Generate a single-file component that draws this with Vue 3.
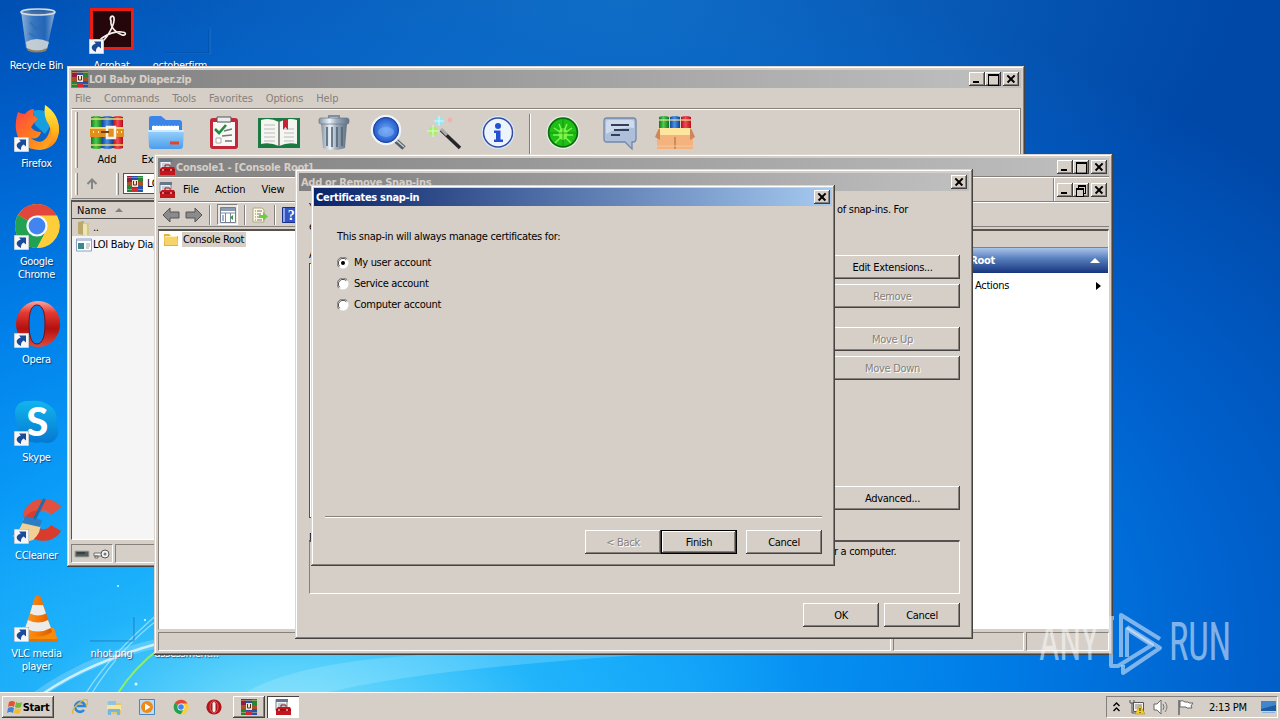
<script setup>
const desktop = [
  { label: 'Recycle Bin', icon: 'bin', cls: 'wide' },
  { label: 'Acrobat', icon: 'acrobat', shortcut: true },
  { label: 'octoberfirm', icon: 'blank', cls: 'shift' },
  { label: 'Firefox', icon: 'firefox', shortcut: true },
  { label: 'Google Chrome', icon: 'chrome', shortcut: true },
  { label: 'Opera', icon: 'opera', shortcut: true },
  { label: 'Skype', icon: 'skype', shortcut: true },
  { label: 'CCleaner', icon: 'ccleaner', shortcut: true },
  { label: 'VLC media player', icon: 'vlc', shortcut: true },
  { label: 'nhot.png', icon: 'blank' },
  { label: 'assessment...', icon: 'none' }
]

// how many icons each desktop row holds
const rows = [3, 1, 1, 1, 1, 1, 3]
let taken = 0
const desktopRows = rows.map((count) => {
  const row = desktop.slice(taken, taken + count)
  taken += count
  return row
})

const rarMenu = ['File', 'Commands', 'Tools', 'Favorites', 'Options', 'Help']

const rarTools = [
  { icon: 'books', label: 'Add', width: 50 },
  { icon: 'extract', label: 'Extract To', width: 68 },
  { icon: 'test', width: 48 },
  { icon: 'view', width: 62 },
  { icon: 'trash', width: 48 },
  { icon: 'find', width: 60 },
  { icon: 'wizard', width: 54 },
  { icon: 'info', width: 52 },
  { icon: 'sep', width: 12 },
  { icon: 'virus', width: 54 },
  { icon: 'comment', width: 60 },
  { icon: 'sfx', width: 50 }
]

const accounts = ['My user account', 'Service account', 'Computer account']
const quickLaunch = ['ie', 'explorer', 'media', 'chrome', 'operasmall']
</script>

<template>
  <div class="screen">
    <!-- icon sheet -->
    <svg class="sheet" width="0" height="0">
      <defs>
        <linearGradient id="gGlass" x1="0" x2="1"><stop offset="0" stop-color="#c3d6e6" stop-opacity=".75" /><stop offset=".35" stop-color="#5e8fc4" stop-opacity=".6" /><stop offset=".7" stop-color="#3d73b8" stop-opacity=".55" /><stop offset="1" stop-color="#b9cfe2" stop-opacity=".8" /></linearGradient>
        <linearGradient id="gFox" x1="0" y1="0" x2="1" y2="1"><stop offset="0" stop-color="#ff3d4d" /><stop offset=".5" stop-color="#ff7a1c" /><stop offset="1" stop-color="#ffb91f" /></linearGradient>
        <linearGradient id="gTail" x1="0" y1="0" x2="0" y2="1"><stop offset="0" stop-color="#fff04a" /><stop offset=".6" stop-color="#ffb61a" /><stop offset="1" stop-color="#ff7d1c" /></linearGradient>
        <linearGradient id="gOpera" x1="0" y1="0" x2="0" y2="1"><stop offset="0" stop-color="#f7a9a2" /><stop offset=".25" stop-color="#e53a32" /><stop offset=".6" stop-color="#b3100f" /><stop offset="1" stop-color="#e04a3c" /></linearGradient>
        <linearGradient id="gSkype" x1="0" y1="0" x2="0" y2="1"><stop offset="0" stop-color="#12b5ee" /><stop offset="1" stop-color="#0578d0" /></linearGradient>
        <linearGradient id="gCone" x1="0" x2="1"><stop offset="0" stop-color="#ff9a2e" /><stop offset=".5" stop-color="#f57a05" /><stop offset="1" stop-color="#d95d00" /></linearGradient>
        <linearGradient id="gFolder" x1="0" y1="0" x2="0" y2="1"><stop offset="0" stop-color="#9bd4fb" /><stop offset="1" stop-color="#4b9cec" /></linearGradient>
        <linearGradient id="gMetal" x1="0" x2="1"><stop offset="0" stop-color="#8494a4" /><stop offset=".35" stop-color="#edf3f8" /><stop offset=".6" stop-color="#9aaaba" /><stop offset="1" stop-color="#5f7182" /></linearGradient>
        <linearGradient id="gRed" x1="0" x2="1"><stop offset="0" stop-color="#b60d1c" /><stop offset=".45" stop-color="#f24a52" /><stop offset="1" stop-color="#b60d1c" /></linearGradient>
        <linearGradient id="gGreen" x1="0" x2="1"><stop offset="0" stop-color="#137a1c" /><stop offset=".45" stop-color="#4ecb50" /><stop offset="1" stop-color="#11721a" /></linearGradient>
        <linearGradient id="gBlue" x1="0" x2="1"><stop offset="0" stop-color="#14479c" /><stop offset=".45" stop-color="#4a8fe8" /><stop offset="1" stop-color="#123f8e" /></linearGradient>
        <radialGradient id="gLens"><stop offset="0" stop-color="#6faaf5" /><stop offset="1" stop-color="#1a50c8" /></radialGradient>
      </defs>

      <symbol id="i-bin" viewBox="0 0 48 48">
        <path d="M8 5 L13 42 Q24 48 34 42 L42 6 Z" fill="url(#gGlass)" />
        <path d="M13 36 Q23 30 36 36 L34 43 Q24 48 14 43Z" fill="#d9dad6" opacity=".85" />
        <path d="M14 42 Q24 47 34 42 L33 45 Q24 48 15 45Z" fill="#8c7d66" />
        <path d="M17 16 L23 23 L31 18 L29 28 M16 27 L22 31" fill="none" stroke="#2f69ae" stroke-width="2" opacity=".6" />
        <ellipse cx="25" cy="6" rx="17" ry="3" fill="#4c6e98" fill-opacity=".6" stroke="#d4dde2" stroke-width="1.6" />
      </symbol>
      <symbol id="i-acrobat" viewBox="0 0 48 48">
        <path d="M2 2h44v42H2z" fill="#ee1c12" /><path d="M5 5h38v36H5z" fill="#25060a" />
        <path d="M23 15c-2-4 2-7 3-3 1 5-5 17-10 22-3 3-5 0-2-2 5-4 14-7 20-6 5 0 4 4 0 3-6-2-12-8-11-14z" fill="none" stroke="#f5efee" stroke-width="1.7" />
      </symbol>
      <symbol id="i-blank" viewBox="0 0 48 48">
        <path d="M2 47 H46 V23" fill="none" stroke="#073c79" stroke-opacity=".45" stroke-width="1" />
        <path d="M2 48 H47 V22" fill="none" stroke="#58b9f1" stroke-opacity=".25" />
      </symbol>
      <symbol id="i-firefox" viewBox="0 0 48 48">
        <circle cx="25" cy="24" r="18" fill="#0b65c9" /><path d="M20 7q14-4 21 10l-9 13-10-9z" fill="#159fe0" />
        <path d="M5 8q3 2 7 2 4-5 9-5l-1 6 5 4-4 4-3 4q3 5 10 5-2 8-10 6 10 8 16-1 7-12-1-21l-1-11q14 10 14 25Q45 44 27 46 6 45 3 26q-1-9 2-18z" fill="url(#gFox)" />
        <path d="M32 1q14 9 14 25-1 14-13 18 10-9 3-23-6-8-4-20z" fill="url(#gTail)" />
      </symbol>
      <symbol id="i-chrome" viewBox="0 0 48 48">
        <circle cx="24" cy="24" r="22" fill="#ffcf36" />
        <path d="M24 24 L5 13 A22 22 0 0 1 43.5 13.5 Z" fill="#e1483b" /><path d="M5 13 A22 22 0 0 0 24 46 L33 29 L24 24Z" fill="#23a152" />
        <path d="M24 13.5h20A22 22 0 0 1 24 46l9-17z" fill="#fdce3a" />
        <circle cx="24" cy="24" r="10.6" fill="#f7f9fc" /><circle cx="24" cy="24" r="8.4" fill="#4285f0" />
      </symbol>
      <symbol id="i-opera" viewBox="0 0 48 48">
        <path fill-rule="evenodd" d="M25 1a22 23 0 1 0 .1 0zM24 5c6 0 8 8 8 19s-2 20-8 20-8-9-8-20 2-19 8-19z" fill="url(#gOpera)" />
        <path d="M24 5c6 0 8 8 8 19s-2 20-8 20-8-9-8-20 2-19 8-19z" fill="none" stroke="#771018" stroke-width="1" />
      </symbol>
      <symbol id="i-skype" viewBox="0 0 48 48">
        <path d="M14 3C22 3 26 2 32 5 42 9 45 17 43 25 50 38 40 48 29 44 16 47 4 39 5 26-2 13 4 3 14 3z" fill="url(#gSkype)" />
        <text x="24" y="38" text-anchor="middle" font-family="Lato" font-weight="900" font-size="40" fill="#fff">S</text>
      </symbol>
      <symbol id="i-ccleaner" viewBox="0 0 48 48">
        <path d="M48 11C38-3 9 1 10 24c1 25 30 26 38 11l-10-6c-6 8-15 4-15-5s9-14 15-5z" fill="#d93b2c" />
        <path d="M48 11C38-3 9 1 10 24q10-16 28-5z" fill="#e8604c" opacity=".6" />
        <path d="M0 40q9-8 11-18l16 5q2 9-7 17-12 4-20-4z" fill="#f2cf94" /><path d="M12 20l17 4-2 7-18-4z" fill="#2c7ec4" /><path d="M22 22 31 4" stroke="#226cab" stroke-width="3" stroke-linecap="round" />
      </symbol>
      <symbol id="i-vlc" viewBox="0 0 48 48">
        <path d="M12 34h29l4 13H8z" fill="#f78b0c" /><path d="M8 45h37v3H8z" fill="#e47400" />
        <path d="M22 3q3-3 6 0l11 35q-14 9-28 0z" fill="url(#gCone)" />
        <path d="M19.500 11h10.500l3 8.500q-8 4-16 0zM15 26q10 5 20 0l3 8q-13 7-26 0z" fill="#ececea" />
      </symbol>
      <symbol id="i-none" viewBox="0 0 48 48"></symbol>

      <symbol id="i-arrow" viewBox="0 0 15 15">
        <path d="M0 0h15v15H0z" fill="#f4f6f8" stroke="#9aa2ab" />
        <path d="M5 2.500h7v7L9.700 7.400Q6.500 9 7 13 1.500 10.500 3 7 4.300 5.300 6.800 4.500z" fill="#1b4b96" />
      </symbol>

      <symbol id="i-rar" viewBox="0 0 16 16">
        <path d="M0 0h5v16H0z" fill="#8f1f3c" /><path d="M5 0h6v16H5z" fill="#2b4da8" /><path d="M11 0h5v16h-5z" fill="#26843a" />
        <path d="M0 9h5v7H0z" fill="#21843b" /><path d="M11 9h5v7h-5z" fill="#2454a8" /><path d="M0 1h16v1H0zM0 13h16v1H0z" fill="#f1c37a" opacity=".5" />
        <path d="M0 6h16v4H0z" fill="#ab4f26" /><path d="M5 4h6v7H5z" fill="#f4e2c8" /><path d="M6.500 5v4h3V5" fill="none" stroke="#5a2a2a" /><path d="M5 12h6v4H5z" fill="#d82838" />
      </symbol>
      <symbol id="i-mmc" viewBox="0 0 16 16">
        <path d="M1 .5h11v11H1z" fill="#eef1f4" stroke="#7b8490" /><path d="M1 0h12v3H1z" fill="#65778c" /><path d="M3 5h7M3 7h7" stroke="#a1aab5" />
        <path d="M3 8h12l1 2v6H1v-6z" fill="#c5161e" /><path d="M6 8V6h5v2" fill="none" stroke="#9c1118" /><path d="M1 11h15" stroke="#7b0b11" /><path d="M4 10v2M12 10v2" stroke="#fff" />
      </symbol>

      <symbol id="i-books" viewBox="0 0 36 36">
        <path d="M2 2q5-2 11 0v31q-5 2-11 0z" fill="url(#gGreen)" /><path d="M13 2q5-2 11 0v31q-5 2-11 0z" fill="url(#gBlue)" /><path d="M24 2q5-2 10 0v31q-5 2-10 0z" fill="url(#gRed)" />
        <path d="M2 4h32M2 30h32" stroke="#e6dc70" stroke-width="1.500" /><path d="M1 12h34v10H1z" fill="#e38f1e" /><path d="M1 13h34" stroke="#fad26c" stroke-width="2" />
        <path d="M18 12h8v11h-8z" fill="none" stroke="#f2f2ef" stroke-width="2.500" /><path d="M12 17h8" stroke="#7e3d10" stroke-width="2" /><path d="M4 17h1m4 0h1m18 0h1m3 0h1" stroke="#fff3b0" stroke-width="2" />
      </symbol>
      <symbol id="i-extract" viewBox="0 0 36 36">
        <path d="M1 3q0-2 3-2h9l5 4h13q3 0 3 3v20H1z" fill="#3b84e8" /><path d="M4 11h27v10H4z" fill="#fdfefe" /><path d="M5 10.500h26" stroke="#aac" stroke-dasharray="1.500 1.500" />
        <path d="M0 15h36l-1 16q0 3-3 3H4q-3 0-3-3z" fill="url(#gFolder)" /><path d="M0 16h36" stroke="#cbeaff" stroke-width="2" /><path d="M22 28h9" stroke="#e0452c" stroke-width="3" />
      </symbol>
      <symbol id="i-test" viewBox="0 0 36 36">
        <rect x="4" y="3" width="28" height="31" rx="3" fill="#c2283a" /><path d="M7 7h22v24H7z" fill="#f8f8f6" /><path d="M11 2h14v5H11z" fill="#e9ecef" stroke="#555" />
        <path d="M9 14l4 4 7-8" fill="none" stroke="#238c3e" stroke-width="2.600" /><path d="M18 16l8-2M16 21l10-1M19 26h7" stroke="#777" stroke-width="1.300" /><path d="M10 23h5v5h-5z" fill="#fff" stroke="#aaa" />
      </symbol>
      <symbol id="i-view" viewBox="0 0 44 36">
        <path d="M1 3h42v30H1z" fill="#1b7a42" /><path d="M4 5q9-3 18 2 9-5 18-2v24q-9-2-18 2-9-4-18-2z" fill="#f5f5f2" /><path d="M22 7v24" stroke="#8b8b8b" stroke-width="2" />
        <path d="M7 10h11M7 14h11M7 18h11M7 22h11M7 26h11M27 14h10M27 18h10M27 22h10M27 26h10" stroke="#bbb" /><path d="M26 4h5v11l-2.500-3L26 15z" fill="#c82234" />
      </symbol>
      <symbol id="i-trash" viewBox="0 0 36 36">
        <path d="M13 4V1h10v3" fill="none" stroke="#7d8fa0" stroke-width="2" /><path d="M5 8h26l-2 25q-11 4-22 0z" fill="url(#gMetal)" />
        <rect x="3" y="3" width="30" height="6" rx="2" fill="url(#gMetal)" stroke="#64778a" stroke-width=".7" /><path d="M11 12v19M16 12v20M21 12v20M26 12v19" stroke="#536576" stroke-width="1.600" />
      </symbol>
      <symbol id="i-find" viewBox="0 0 36 36">
        <path d="M25 25l9 8" stroke="#555d66" stroke-width="5" /><path d="M26 25l8 7" stroke="#c5cdd4" stroke-width="1.500" />
        <circle cx="16" cy="15" r="14" fill="url(#gLens)" stroke="#eef4fb" stroke-width="2.500" /><circle cx="16" cy="15" r="12.500" fill="none" stroke="#1d3f94" /><ellipse cx="16" cy="17" rx="8" ry="5" fill="#81b3f6" opacity=".55" />
      </symbol>
      <symbol id="i-wizard" viewBox="0 0 36 36">
        <path d="M14 15l19 18" stroke="#25262a" stroke-width="3.500" /><path d="M14 14l6 6" stroke="#aaa" stroke-width="3" /><circle cx="12" cy="6" r="4" fill="#8ee9fa" /><circle cx="6" cy="16" r="4.500" fill="#a6ef6a" /><circle cx="23" cy="5" r="2.500" fill="#f3b1ae" />
        <path d="M12 1v10M7 6h10M6 10v12M0 16h12" stroke="#fff" opacity=".7" />
      </symbol>
      <symbol id="i-info" viewBox="0 0 36 36">
        <circle cx="18" cy="17.500" r="16.500" fill="#dbe8fb" /><circle cx="18" cy="17.500" r="14.500" fill="#eef4fd" stroke="#2f4da0" stroke-width="1.500" /><circle cx="18" cy="11" r="3" fill="#2451d2" /><path d="M14 15.500h6.500v9H23v2.500h-9v-2.500h2V18h-2z" fill="#2451d2" />
      </symbol>
      <symbol id="i-virus" viewBox="0 0 36 36">
        <circle cx="18" cy="17.500" r="16.500" fill="#e7f3e2" /><circle cx="18" cy="17.500" r="15.300" fill="#0c7010" /><circle cx="18" cy="17.500" r="13.500" fill="#20be18" /><ellipse cx="18" cy="19" rx="4.500" ry="6" fill="#7df648" />
        <path d="M14 9l2 5m6-5l-2 5M9 13l6 4M27 13l-6 4M8 20h6m14 0h-6M10 28l5-5m11 5l-5-5" stroke="#7df648" stroke-width="1.500" /><path d="M18 4v27M5 18h26" stroke="#0e8b12" stroke-width=".7" />
      </symbol>
      <symbol id="i-comment" viewBox="0 0 36 36">
        <path d="M5 3h26q3 0 3 3v18q0 3-3 3h-1v7l-7-7H5q-3 0-3-3V6q0-3 3-3z" fill="#aebfd9" stroke="#7189ab" stroke-width="1.300" /><path d="M6 5h24q2 0 2 3v5Q20 11 4 19V8q0-3 2-3z" fill="#dde7f4" opacity=".7" /><path d="M9 10h18M12 15h15M9 20h9" stroke="#33405a" stroke-width="1.800" />
      </symbol>
      <symbol id="i-sfx" viewBox="0 0 42 36">
        <path d="M5 2q5-2 10 0v14H5z" fill="url(#gGreen)" /><path d="M16 2q5-2 10 0v14H16z" fill="url(#gBlue)" /><path d="M27 2q5-2 10 0v14H27z" fill="url(#gRed)" /><path d="M5 5h32" stroke="#f0e6a0" stroke-width="1.200" />
        <path d="M4 13h34v8H4z" fill="#fde59d" /><path d="M3 20h36v14H3z" fill="#f4b27c" /><path d="M5 13L1 22l5 3V14zM37 13l4 9-5 3V14z" fill="#cf855c" /><path d="M21 22v12" stroke="#a36744" /><path d="M3 31h36" stroke="#f9c79c" />
      </symbol>

      <symbol id="i-folder" viewBox="0 0 16 16"><path d="M1 3h5l2 2h7v10H1z" fill="#e0b33f" /><path d="M2 5h12v8H2z" fill="#fff0b0" /><path d="M1 6h13l1 8H2z" fill="#f6d36b" /></symbol>
      <symbol id="i-upfolder" viewBox="0 0 16 16"><path d="M2 2l6-1v14l-6-1z" fill="#b9aa6c" /><path d="M7 3h6v12H7z" fill="#d2c78f" /><path d="M7 4q3-1 4 1v11l-4-1z" fill="#eee5b4" /></symbol>
      <symbol id="i-app" viewBox="0 0 16 16"><path d="M.5 2h15v12H.5z" fill="#fff" stroke="#8ba0c4" /><path d="M1 2h14v2H1z" fill="#b9c9e4" /><path d="M2 6h6v6H2z" fill="#3b8a8a" /><path d="M10 7h4M10 9h4M10 11h3" stroke="#9aa" /></symbol>
      <symbol id="i-left" viewBox="0 0 18 16"><path d="M1 8l7-7v4h9v6H8v4z" fill="#8b8b8b" stroke="#555" /></symbol>
      <symbol id="i-right" viewBox="0 0 18 16"><path d="M17 8l-7-7v4H1v6h9v4z" fill="#8b8b8b" stroke="#555" /></symbol>
      <symbol id="i-panes" viewBox="0 0 16 16"><path d="M.5.500h15v15H.5z" fill="#fff" stroke="#777f8c" /><path d="M1 1h14v3H1z" fill="#8a9ab0" /><path d="M1 6h14M5.500 6v9M10.500 6v9" stroke="#7d8a9a" /><path d="M2 8h2v6H2z" fill="#98b7da" /><path d="M13 8v5l-3-2.500z" fill="#2ca02c" /></symbol>
      <symbol id="i-export" viewBox="0 0 16 16"><path d="M1 1h9l2 2v12H1z" fill="#fdf9e7" stroke="#b0a780" /><path d="M3 4h1m1 0h5M3 7h1m1 0h4M3 10h1m1 0h3M3 13h1m1 0h5" stroke="#777" /><path d="M7 8h4V5l5 4.500L11 14v-3H7z" fill="#6bce42" /></symbol>
      <symbol id="i-help" viewBox="0 0 16 16"><path d="M.5.500h14v15H.5z" fill="#3555c5" stroke="#1b2f86" /><path d="M1 1h2v14H1z" fill="#8ea6ec" /><text x="9" y="13" text-anchor="middle" font-family="Liberation Serif" font-weight="700" font-size="14" fill="#fff">?</text></symbol>

      <symbol id="i-flag" viewBox="0 0 16 16"><path d="M2 3q3-2 6 0L7 8Q4 6 1 8z" fill="#e4512a" /><path d="M9 3q3 2 6 0l-1 5q-3 2-6 0z" fill="#74b93a" /><path d="M1 9q3-2 6 0l-1 5q-3-2-6 0z" fill="#3f86d8" /><path d="M8 9q3 2 6 0l-1 5q-3 2-6 0z" fill="#f5bd2b" /></symbol>
      <symbol id="i-ie" viewBox="0 0 16 16"><path d="M12 11a5 5 0 1 1 1-4H5" fill="none" stroke="#2a86d8" stroke-width="2.600" /><path d="M1 15Q-1 11 6 5t9-4q2 2-1 6" fill="none" stroke="#e7b72e" stroke-width="1.300" /></symbol>
      <symbol id="i-explorer" viewBox="0 0 16 16"><path d="M1 3h5l1 1h8v11H1z" fill="#e9c863" /><path d="M2 2h8v6H2z" fill="#8cc4e8" /><path d="M1 6h14v5H1z" fill="#f8e49c" /><path d="M2 10h12v6h-3v-3H5v3H2z" fill="#74b8e2" /></symbol>
      <symbol id="i-media" viewBox="0 0 16 16"><path d="M.5.500h15v15H.5z" fill="#bddcf5" stroke="#4a86c0" /><circle cx="8" cy="8" r="6" fill="#f08a16" /><path d="M6 4.500l5.500 3.500L6 11.500z" fill="#fff" /></symbol>
      <symbol id="i-operasmall" viewBox="0 0 16 16"><circle cx="8" cy="8" r="7.600" fill="#b0141a" /><ellipse cx="8" cy="8" rx="4" ry="6" fill="none" stroke="#e8766e" stroke-width=".8" /><rect x="6.500" y="3" width="3" height="10" rx="1.500" fill="#f4efee" /></symbol>
    </svg>

    <svg class="wallpaper" viewBox="0 0 1280 720">
      <path d="M30 700Q100 650 180 640Q330 600 500 480" fill="none" stroke="#fff" stroke-opacity=".2" stroke-width="9" />
      <path d="M44 693Q90 662 160 643" fill="none" stroke="#e4fbff" stroke-opacity=".8" stroke-width="2.500" />
      <path d="M86 693Q110 655 160 612M92 693Q120 648 160 618" fill="none" stroke="#c8f3ff" stroke-opacity=".6" stroke-width="1.300" />
      <path d="M118 693Q134 668 160 648" fill="none" stroke="#8cf06a" stroke-width="2" />
      <path d="M246 692Q300 662 420 655H640Q420 670 330 692z" fill="#c9f5ff" opacity=".22" />
      <circle cx="118" cy="586" r="1" fill="#bff" /><circle cx="136" cy="684" r="1.500" fill="#dff" /><circle cx="145" cy="620" r="1" fill="#dff" />
    </svg>

    <div class="desktop">
      <div v-for="(row, r) in desktopRows" :key="r" class="desk-row">
        <div v-for="item in row" :key="item.label" class="desk-item" :class="item.cls">
          <div class="desk-icon">
            <svg width="48" height="48"><use :href="'#i-' + item.icon" /></svg>
            <svg v-if="item.shortcut" class="shortcut" width="15" height="15"><use href="#i-arrow" /></svg>
          </div>
          <span class="desk-label">{{ item.label }}</span>
        </div>
      </div>
    </div>

    <!-- archive window -->
    <section class="win rar">
      <header class="title">
        <svg width="16" height="16"><use href="#i-rar" /></svg>
        <b class="t-rar">LOI Baby Diaper.zip</b>
        <div class="caps"><i class="cap min"></i><i class="cap max"></i><i class="cap close"></i></div>
      </header>
      <nav class="rar-menu"><span v-for="m in rarMenu" :key="m">{{ m }}</span></nav>
      <div class="rar-bars">
        <div class="rar-tools">
          <i class="grip"></i>
          <div v-for="t in rarTools" :key="t.icon" class="tool" :style="{ width: t.width + 'px' }">
            <i v-if="t.icon === 'sep'" class="tool-sep"></i>
            <svg v-else :width="t.icon === 'view' ? 44 : t.icon === 'sfx' ? 42 : 36" height="36"><use :href="'#i-' + t.icon" /></svg>
            <span v-if="t.label">{{ t.label }}</span>
          </div>
        </div>
        <div class="rar-address">
          <i class="grip"></i>
          <svg class="up" width="12" height="12" viewBox="0 0 12 12"><path d="M6 11V2M1.500 6L6 1.500 10.500 6" fill="none" stroke="#858585" stroke-width="2" /></svg>
          <i class="grip"></i>
          <div class="address"><svg width="16" height="16"><use href="#i-rar" /></svg>LOI Baby Diaper.zip</div>
        </div>
      </div>
      <div class="rar-list">
        <div class="list-head">Name<i class="sort"></i></div>
        <div class="list-row parent"><svg width="16" height="16"><use href="#i-upfolder" /></svg>..</div>
        <div class="list-row"><svg width="16" height="16"><use href="#i-app" /></svg>LOI Baby Diaper</div>
      </div>
      <footer class="rar-status">
        <div class="cell drive">
          <svg width="36" height="12" viewBox="0 0 36 12"><path d="M1 3h14v6H1z" fill="#555a5c" stroke="#aaa" /><path d="M3 5h8" stroke="#222" /><path d="M20 5h9v3h-9zM21 8h3v2h-3z" fill="#f3f3f3" stroke="#555" stroke-width=".8" /><circle cx="31" cy="6" r="4" fill="#f3f3f3" stroke="#555" /><circle cx="31" cy="6" r="1.500" fill="#777" /></svg>
        </div>
        <div class="cell rest"></div>
      </footer>
    </section>

    <!-- management console -->
    <section class="win mmc">
      <header class="title">
        <svg width="16" height="16"><use href="#i-mmc" /></svg>
        <b class="t-mmc">Console1 - [Console Root]</b>
        <div class="caps"><i class="cap min"></i><i class="cap max"></i><i class="cap close"></i></div>
      </header>
      <nav class="mmc-menu">
        <svg width="16" height="16"><use href="#i-mmc" /></svg>
        <span>File</span><span>Action</span><span>View</span>
        <div class="caps inner"><i class="cap min"></i><i class="cap restore"></i><i class="cap close"></i></div>
      </nav>
      <div class="mmc-tools">
        <svg width="18" height="16"><use href="#i-left" /></svg>
        <svg width="18" height="16"><use href="#i-right" /></svg>
        <i class="vsep"></i>
        <span class="pressed"><svg width="16" height="16"><use href="#i-panes" /></svg></span>
        <i class="vsep"></i>
        <svg width="16" height="16"><use href="#i-export" /></svg>
        <i class="vsep"></i>
        <svg width="16" height="16"><use href="#i-help" /></svg>
      </div>
      <div class="mmc-body">
        <div class="tree"><svg width="16" height="16"><use href="#i-folder" /></svg><span>Console Root</span></div>
        <div class="actions">
          <div class="actions-top"></div>
          <div class="actions-head"><b>Console Root</b><i class="tri-up"></i></div>
          <div class="actions-row"><span>More Actions</span><i class="tri-right"></i></div>
        </div>
      </div>
      <footer class="mmc-status"><div class="cell"></div><div class="cell"></div><div class="cell"></div></footer>
    </section>

    <!-- snap-ins dialog -->
    <section class="win snap">
      <header class="title"><b class="t-snap">Add or Remove Snap-ins</b><div class="caps"><i class="cap close"></i></div></header>
      <div class="snap-main">
        <div class="snap-left">
          <p>You can select snap-ins for this console<br />extensible snap-ins, you can configure</p>
          <label>Available snap-ins:</label>
          <div class="snap-list"></div>
          <label>Description:</label>
        </div>
        <div class="snap-right">
          <p>of snap-ins. For</p>
          <div class="btn">Edit Extensions...</div>
          <div class="btn off">Remove</div>
          <div class="btn off gap">Move Up</div>
          <div class="btn off">Move Down</div>
          <div class="btn adv">Advanced...</div>
        </div>
      </div>
      <div class="snap-desc">r a computer.</div>
      <div class="snap-foot"><div class="btn">OK</div><div class="btn">Cancel</div></div>
    </section>

    <!-- certificates wizard -->
    <section class="win cert">
      <header class="title active"><b class="t-cert">Certificates snap-in</b><div class="caps"><i class="cap close"></i></div></header>
      <div class="cert-body">
        <p>This snap-in will always manage certificates for:</p>
        <div v-for="(a, i) in accounts" :key="a" class="radio">
          <svg width="12" height="12" viewBox="0 0 12 12">
            <circle cx="6" cy="6" r="5.500" fill="#fff" /><path d="M1.800 10.200A5.500 5.500 0 0 1 10.200 1.800" fill="none" stroke="#777" /><path d="M2.700 9.300A4.400 4.400 0 0 1 9.300 2.700" fill="none" stroke="#444" />
            <circle v-if="i === 0" cx="6" cy="6" r="2" fill="#000" />
          </svg>
          <span>{{ a }}</span>
        </div>
      </div>
      <div class="cert-foot">
        <div class="btn off">&lt; Back</div>
        <div class="btn default">Finish</div>
        <div class="btn last">Cancel</div>
      </div>
    </section>

    <svg class="watermark" width="200" height="70" viewBox="0 0 200 70">
      <g fill="#fff" fill-opacity=".5" font-family="Roboto" font-size="53">
        <text x="4" y="53" textLength="60" lengthAdjust="spacingAndGlyphs">ANY</text>
        <text x="134" y="53" textLength="62" lengthAdjust="spacingAndGlyphs">RUN</text>
      </g>
      <g fill="none" stroke="#e6f0fb" stroke-opacity=".55" stroke-width="4" stroke-linejoin="round">
        <path d="M86 50V8l39 24M92 20l33 21L88 66V58" /><path d="M79 11h-3v48h7l34-21-25-16v28" />
      </g>
    </svg>

    <footer class="taskbar">
      <div class="start"><svg width="16" height="16"><use href="#i-flag" /></svg><b>Start</b></div>
      <div class="quick"><svg v-for="q in quickLaunch" :key="q" width="16" height="16"><use :href="'#i-' + q" /></svg></div>
      <div class="task"><svg width="16" height="16"><use href="#i-rar" /></svg></div>
      <div class="task on"><svg width="16" height="16"><use href="#i-mmc" /></svg></div>
      <div class="tray">
        <svg class="chev" width="7" height="10" viewBox="0 0 7 10"><path d="M.5 4l3-3 3 3M.5 9l3-3 3 3" fill="none" stroke="#000" stroke-width="1.400" /></svg>
        <svg class="net" width="16" height="16" viewBox="0 0 16 16"><path d="M4.500 3.500h10v9h-10z" fill="#f5f5f5" stroke="#555" /><path d="M6 5h7v5H6z" fill="#bbb" /><path d="M1 1v3h4V1M3 4v10h4" fill="none" stroke="#555" /><path d="M11 6l5 9H6z" fill="#f6cf1b" stroke="#b98f00" stroke-width=".6" /><path d="M11 9v3m0 1v1" stroke="#222" /></svg>
        <svg class="vol" width="16" height="16" viewBox="0 0 16 16"><path d="M1 5h3l4-4v14l-4-4H1z" fill="#fff" stroke="#666" /><path d="M10 5q2 3 0 6M12 3q4 5 0 10" fill="none" stroke="#777" /></svg>
        <svg class="act" width="17" height="16" viewBox="0 0 17 16"><path d="M2 1v15" stroke="#666" stroke-width="1.500" /><path d="M3 2q3-1 5 1h3l1 1h4l-2 3 1 2h-5l-1-1H3z" fill="#fff" stroke="#666" /></svg>
        <span class="clock">2:13 PM</span>
        <svg class="show" width="16" height="14" viewBox="0 0 16 14"><path d="M0 1h15v10H0z" fill="#1d5ba5" /><path d="M0 1h15v4L0 9z" fill="#3f86cb" /><path d="M1 12.500h13" stroke="#8fb2d4" /></svg>
      </div>
    </footer>
  </div>
</template>

<style>
body {
  margin: 0;
  overflow: hidden;
}
</style>

<style scoped>
.screen {
  --face: #d6cfc8;
  position: relative;
  width: 1280px;
  height: 720px;
  overflow: hidden;
  font: 11px/13px 'DejaVu Sans Condensed', 'DejaVu Sans', sans-serif;
  font-stretch: condensed;
  letter-spacing: -0.3px;
  color: #000;
  white-space: nowrap;
  cursor: default;
  background:
    radial-gradient(ellipse 520px 260px at 290px 720px, rgba(140, 232, 250, 0.9), rgba(60, 200, 250, 0.45) 50%, rgba(0, 160, 250, 0) 100%),
    radial-gradient(ellipse 620px 330px at 620px -20px, rgba(20, 118, 204, 0.8), rgba(10, 90, 190, 0) 100%),
    radial-gradient(ellipse 1250px 720px at 330px 640px, #08acff 0%, #0a9cf8 30%, #007ee8 52%, #0060cc 74%, #0048a8 100%);
}

.screen *,
.screen {
  box-sizing: border-box;
}

.screen i {
  display: block;
  font-style: normal;
}

.screen svg {
  display: block;
  flex: none;
}

.screen p {
  margin: 0;
}

.sheet,
.wallpaper {
  position: absolute;
  top: 0;
  left: 0;
}

/* Desktop icons */
.desktop {
  position: absolute;
  top: 6px;
  left: -1px;
}

.desk-row {
  display: flex;
  height: 98px;
}

.desk-item {
  width: 75px;
  display: flex;
  flex-direction: column;
  align-items: center;
}

.desk-icon {
  position: relative;
  height: 53px;
}

.shortcut {
  position: absolute;
  left: 1px;
  bottom: 5px;
}

.desk-label {
  width: 58px;
  display: flex;
  justify-content: center;
  text-align: center;
  white-space: normal;
  color: #fff;
  text-shadow: 1px 1px 1px rgba(0, 20, 60, 0.6);
}

.wide .desk-label {
  white-space: nowrap;
}

.shift .desk-label {
  margin-left: -13px;
}

/* Window frame */
.win {
  position: absolute;
  display: flex;
  flex-direction: column;
  padding: 4px;
  overflow: hidden;
  background: var(--face);
  box-shadow:
    inset -1px -1px #45423f,
    inset 1px 1px #dcd6d0,
    inset -2px -2px #85807b,
    inset 2px 2px #fff;
}

.title {
  flex: none;
  display: flex;
  align-items: center;
  height: 18px;
  padding: 0 2px 0 1px;
  color: #d6cfc8;
  background: linear-gradient(90deg, #808080, #c0c0c0);
}

.title.active {
  color: #fff;
  background: linear-gradient(90deg, #0a246a, #a6caf0);
}

.title b {
  padding-left: 1px;
}

.caps {
  display: flex;
  margin-left: auto;
}

.cap {
  position: relative;
  width: 16px;
  height: 14px;
  background: var(--face);
  box-shadow:
    inset -1px -1px #403d3a,
    inset 1px 1px #fff,
    inset -2px -2px #85807b;
}

.cap.close {
  margin-left: 2px;
}

.cap::before,
.cap::after {
  content: '';
  position: absolute;
}

.min::before {
  left: 4px;
  top: 9px;
  width: 6px;
  height: 2px;
  background: #000;
}

.max::before {
  left: 3px;
  top: 2px;
  width: 9px;
  height: 9px;
  border: 1px solid #000;
  border-top-width: 2px;
}

.restore::before {
  left: 5px;
  top: 2px;
  width: 6px;
  height: 6px;
  border: 1px solid #000;
  border-top-width: 2px;
}

.restore::after {
  left: 3px;
  top: 5px;
  width: 6px;
  height: 6px;
  border: 1px solid #000;
  border-top-width: 2px;
  background: var(--face);
}

.close::before,
.close::after {
  left: 3px;
  top: 6px;
  width: 10px;
  height: 1.600px;
  background: #000;
  transform: rotate(45deg);
}

.close::after {
  transform: rotate(-45deg);
}

.cell {
  border: 1px solid #85807b;
  border-right-color: #fff;
  border-bottom-color: #fff;
}

.btn {
  display: flex;
  align-items: center;
  justify-content: center;
  width: 76px;
  height: 24px;
  box-shadow:
    inset -1px -1px #45423f,
    inset 1px 1px #fff,
    inset -2px -2px #85807b;
}

.btn.off {
  color: #85807b;
  text-shadow: 1px 1px #fff;
}

.btn.default {
  border: 1px solid #000;
}

/* Archive window */
.rar {
  left: 67px;
  top: 66px;
  width: 958px;
  height: 501px;
}

.rar-menu {
  flex: none;
  display: flex;
  gap: 13px;
  height: 20px;
  padding: 4px 4px 0;
  color: #85807b;
  letter-spacing: -0.1px;
}

.rar-bars {
  flex: none;
  height: 91px;
  border: 1px solid #85807b;
  border-left-color: #fff;
  box-shadow: inset 0 1px #fff, inset -1px 0 #fff;
}

.rar-tools {
  display: flex;
  height: 60px;
  padding: 3px 0 0 3px;
}

.grip {
  flex: none;
  width: 3px;
  height: 56px;
  border-left: 1px solid #fff;
  border-right: 1px solid #85807b;
}

.rar-tools .grip {
  margin-right: 4px;
}

.tool {
  flex: none;
  display: flex;
  flex-direction: column;
  align-items: center;
  padding-top: 3px;
}

.tool span {
  padding-top: 2px;
  letter-spacing: 0;
}

.tool-sep {
  width: 2px;
  height: 54px;
  margin-top: -1px;
  border-left: 1px solid #85807b;
  border-right: 1px solid #fff;
}

.rar-address {
  display: flex;
  align-items: center;
  height: 29px;
  padding-left: 3px;
}

.rar-address .grip {
  height: 22px;
}

.up {
  margin: 0 18px 0 8px;
}

.address {
  display: flex;
  align-items: center;
  gap: 4px;
  width: 700px;
  height: 21px;
  margin-left: 4px;
  padding-left: 3px;
  background: #fff;
  border: 1px solid #55524f;
}

.rar-list {
  flex: 1;
  margin-top: 1px;
  background: #f5f5f5;
  border: 1px solid #55524f;
  border-top-width: 2px;
  border-bottom-color: #fff;
}

.list-head {
  display: flex;
  align-items: center;
  height: 17px;
  padding-left: 5px;
  background: var(--face);
  border-bottom: 1px solid #55524f;
  letter-spacing: 0;
}

.sort {
  margin-left: 9px;
  border: 4px solid transparent;
  border-top: 0;
  border-bottom-color: #85807b;
}

.list-row {
  display: flex;
  align-items: center;
  gap: 1px;
  height: 17px;
  padding-left: 4px;
}

.parent {
  background: var(--face);
}

.rar-status {
  flex: none;
  display: flex;
  gap: 2px;
  height: 23px;
  padding-top: 4px;
}

.drive {
  width: 42px;
  padding: 3px 0 0 2px;
}

.rest {
  flex: 1;
}

/* Management console */
.mmc {
  left: 154px;
  top: 154px;
  width: 959px;
  height: 501px;
}

.mmc-menu {
  flex: none;
  display: flex;
  align-items: center;
  height: 26px;
  padding: 1px 2px 0 1px;
  border-top: 1px solid #85807b;
  border-bottom: 1px solid #85807b;
  box-shadow: inset 0 1px #fff;
}

.mmc-menu span {
  margin-left: 16px;
  letter-spacing: -0.1px;
}

.mmc-menu svg + span {
  margin-left: 8px;
}

.caps.inner {
  align-items: center;
  height: 23px;
  padding-left: 3px;
  border-left: 1px solid #85807b;
  box-shadow: inset 1px 0 #fff;
}

.mmc-tools {
  flex: none;
  display: flex;
  align-items: center;
  height: 25px;
  padding-left: 4px;
  border-top: 1px solid #fff;
  border-bottom: 1px solid #85807b;
}

.mmc-tools svg + svg {
  margin-left: 5px;
}

.vsep {
  width: 2px;
  height: 20px;
  margin: 0 6px;
  border-left: 1px solid #85807b;
  border-right: 1px solid #fff;
}

.pressed {
  display: flex;
  align-items: center;
  justify-content: center;
  width: 21px;
  height: 21px;
  background: #ebe7e3;
  border: 1px solid #85807b;
  border-right-color: #fff;
  border-bottom-color: #fff;
}

.mmc-body {
  flex: 1;
  display: flex;
  justify-content: space-between;
  margin-top: 2px;
  border: 1px solid #85807b;
  border-top: 2px solid #55524f;
  border-right-color: #fff;
  border-bottom-color: #d6cfc8;
  background: #fff;
}

.tree {
  display: flex;
  gap: 3px;
  padding: 0 0 0 4px;
}

.tree span {
  align-self: flex-start;
  margin-top: 1px;
  padding: 1px 2px 1px 1px;
  background: var(--face);
}

.actions {
  width: 180px;
}

.actions-top {
  height: 17px;
  background: var(--face);
  border-bottom: 1px solid #85807b;
}

.actions-head,
.actions-row {
  display: flex;
  align-items: center;
  justify-content: space-between;
  height: 25px;
}

.actions-head {
  color: #fff;
  padding-right: 8px;
  background: linear-gradient(#a9c4e8, #5b82c0 40%, #16347e);
}

.actions-head b,
.actions-row span {
  width: 67px;
  display: flex;
  justify-content: flex-end;
}

.actions-row span {
  width: 81px;
}

.actions-row {
  padding-right: 7px;
}

.tri-up {
  border: 5px solid transparent;
  border-top: 0;
  border-bottom-color: #fff;
}

.tri-right {
  border: 4px solid transparent;
  border-right: 0;
  border-left: 5px solid #000;
}

.mmc-status {
  flex: none;
  display: flex;
  gap: 2px;
  height: 21px;
  padding-top: 2px;
}

.mmc-status .cell {
  flex: none;
  width: 733px;
}

.mmc-status .cell:nth-child(2) {
  width: 131px;
}

.mmc-status .cell:nth-child(3) {
  width: 83px;
}

/* Snap-ins dialog */
.snap {
  left: 295px;
  top: 169px;
  width: 678px;
  height: 470px;
}

.snap-main {
  display: flex;
  justify-content: space-between;
  height: 350px;
  padding: 0 9px 0 10px;
}

.snap-left {
  width: 500px;
}

.snap-left p {
  margin: 7px 0 12px;
  line-height: 19px;
}

.snap-left label {
  display: block;
}

.snap-list {
  height: 255px;
  margin: 2px 0 13px;
  border: 1px solid #55524f;
  background: #fff;
}

.snap-right {
  width: 135px;
}

.snap-right p {
  margin: 12px 0 39px 12px;
}

.snap-right .btn {
  width: 135px;
  margin-bottom: 5px;
}

.snap-right .gap {
  margin-top: 19px;
}

.snap-right .adv {
  margin-top: 106px;
}

.snap-desc {
  height: 54px;
  margin: -1px 9px 0 10px;
  padding: 3px 0 0 524px;
  border: 1px solid #fff;
  border-left-color: #85807b;
  border-top: 2px solid #55524f;
}

.snap-foot {
  display: flex;
  justify-content: flex-end;
  gap: 5px;
  padding: 9px 9px 0 0;
}

/* Certificates wizard */
.cert {
  left: 311px;
  top: 185px;
  width: 524px;
  height: 381px;
  padding: 3px;
}

.cert-body {
  flex: 1;
  padding: 24px 23px;
}

.cert-body p {
  margin-bottom: 9px;
}

.radio {
  display: flex;
  align-items: center;
  gap: 5px;
  height: 21px;
  margin-bottom: 0;
}

.cert-foot {
  display: flex;
  justify-content: flex-end;
  height: 47px;
  margin: 0 10px 0 11px;
  padding-top: 13px;
  border-top: 1px solid #85807b;
  box-shadow: inset 0 1px #fff;
}

.last {
  margin-left: 9px;
}

.watermark {
  position: absolute;
  left: 1035px;
  top: 607px;
}

/* Taskbar */
.taskbar {
  position: absolute;
  left: 0;
  top: 692px;
  width: 1280px;
  height: 28px;
  display: flex;
  align-items: center;
  padding: 2px 2px 0;
  background: var(--face);
  box-shadow: inset 0 1px #fff;
}

.start,
.task {
  display: flex;
  align-items: center;
  justify-content: center;
  width: 52px;
  height: 22px;
  box-shadow:
    inset -1px -1px #45423f,
    inset 1px 1px #fff,
    inset -2px -2px #85807b;
}

.quick {
  display: flex;
  gap: 17.500px;
  margin-left: 18px;
}

.task {
  width: 32px;
  margin-left: 11px;
}

.task.on {
  margin-left: 2px;
  background: #fff;
  box-shadow:
    inset 1px 1px #45423f,
    inset -1px -1px #fff;
}

.tray {
  display: flex;
  align-items: center;
  width: 172px;
  height: 22px;
  margin-left: auto;
  padding-left: 6px;
  border: 1px solid #85807b;
  border-right-color: #fff;
  border-bottom-color: #fff;
}

.net {
  margin-left: 9px;
}

.vol,
.act {
  margin-left: 8px;
}

.clock {
  margin-left: 15px;
}

.show {
  margin-left: auto;
}
</style>
